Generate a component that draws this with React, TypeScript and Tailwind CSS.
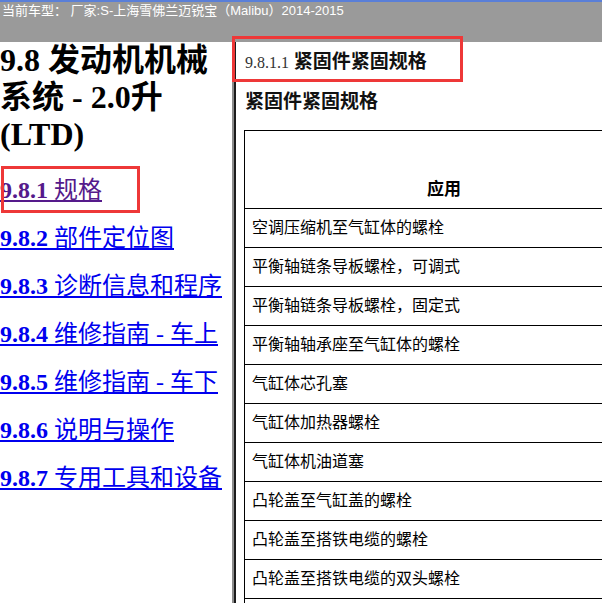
import React from "react";

const serif = "font-['Liberation_Serif','Noto_Sans_CJK_SC',serif]";

const links = [
  { num: "9.8.1", label: "规格", visited: true },
  { num: "9.8.2", label: "部件定位图" },
  { num: "9.8.3", label: "诊断信息和程序" },
  { num: "9.8.4", label: "维修指南 - 车上" },
  { num: "9.8.5", label: "维修指南 - 车下" },
  { num: "9.8.6", label: "说明与操作" },
  { num: "9.8.7", label: "专用工具和设备" },
];

const rows = [
  "空调压缩机至气缸体的螺栓",
  "平衡轴链条导板螺栓，可调式",
  "平衡轴链条导板螺栓，固定式",
  "平衡轴轴承座至气缸体的螺栓",
  "气缸体芯孔塞",
  "气缸体加热器螺栓",
  "气缸体机油道塞",
  "凸轮盖至气缸盖的螺栓",
  "凸轮盖至搭铁电缆的螺栓",
  "凸轮盖至搭铁电缆的双头螺栓",
  "",
];

const App = () => {
  return (
    <div className={`relative w-[602px] h-[603px] overflow-hidden bg-white ${serif}`}>
      {/* top bar */}
      <div className="h-[42px] bg-[#9a9a9a] border-t-2 border-[#5a7fd8]">
        <div className="pl-[2px] pt-[1px] text-[13px] leading-[16px] text-white font-['Liberation_Sans','Noto_Sans_CJK_SC',sans-serif] whitespace-nowrap">
          当前车型： 厂家:S-上海雪佛兰迈锐宝（Malibu）2014-2015
        </div>
      </div>

      <div className="flex h-[561px]">
        {/* left nav */}
        <div className="w-[232px] shrink-0 overflow-hidden">
          <h1 className="text-[32px] leading-[37px] text-black font-bold">
            9.8 发动机机械系统 - 2.0升 (LTD)
          </h1>
          <div className="mt-[23px] flex flex-col gap-[20px]">
            {links.map((l) => (
              <a
                key={l.num}
                href="#"
                className={`text-[24px] leading-[28px] underline whitespace-nowrap ${
                  l.visited ? "text-[#551a8b]" : "text-[#0000ee]"
                }`}
              >
                <b>{l.num}</b> {l.label}
              </a>
            ))}
          </div>
        </div>

        {/* right frame */}
        <div className="flex-1 border-l-2 border-[#8c8c8c] min-w-0">
          <div className="h-full border-l-2 border-[#1c1c1c] overflow-hidden pl-[8px] pt-[8px]">
            <div className="pl-[1px] text-[19px] leading-[24px] whitespace-nowrap">
              <span className="text-[16px] text-[#333]">9.8.1.1</span>{" "}
              <span className="font-semibold text-[#111]">紧固件紧固规格</span>
            </div>
            <div className="mt-[15px] pl-[1px] text-[19px] leading-[24px] font-semibold text-[#111] whitespace-nowrap">
              紧固件紧固规格
            </div>
            <table className="mt-[16px] w-[400px] border-collapse border border-black text-[16px] leading-[24px]">
              <thead>
                <tr className="h-[78px]">
                  <th className="border border-black align-bottom pb-[6px] text-center font-semibold text-[17px]">
                    应用
                  </th>
                </tr>
              </thead>
              <tbody>
                {rows.map((r, i) => (
                  <tr key={i} className="h-[39px]">
                    <td className="border border-black pl-[7px] align-middle text-black whitespace-nowrap">
                      {r}
                    </td>
                  </tr>
                ))}
              </tbody>
            </table>
          </div>
        </div>
      </div>

      {/* red highlight boxes */}
      <div className="absolute left-[1px] top-[166px] w-[139px] h-[47px] border-[3px] border-[#ee3838]" />
      <div className="absolute left-[232px] top-[36px] w-[231px] h-[46px] border-[3px] border-[#ee3838]" />
    </div>
  );
};

export default App;
